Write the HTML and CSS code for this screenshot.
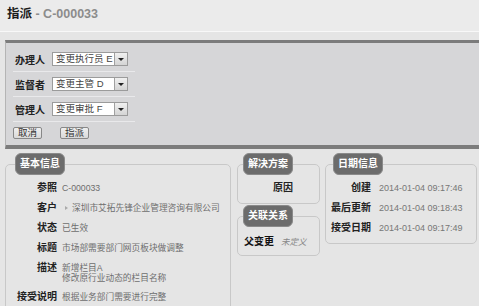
FILE: index.html
```html
<!DOCTYPE html>
<html lang="zh">
<head>
    <meta charset="UTF-8">
    <meta name="viewport" content="width=device-width, initial-scale=1.0">
    <title>指派 - C-000033</title>
    <link rel="stylesheet" href="styles.css">
</head>
<body>
    <!-- Title -->
    <div class="title-bar">
        <h1>指派 <span class="ref">- C-000033</span></h1>
    </div>

    <!-- Assign form -->
    <div class="assign-panel">
        <div class="form-row">
            <label>办理人</label>
            <div class="select"><span class="text">变更执行员 E</span><span class="drop"></span></div>
        </div>
        <div class="form-row">
            <label>监督者</label>
            <div class="select"><span class="text">变更主管 D</span><span class="drop"></span></div>
        </div>
        <div class="form-row">
            <label>管理人</label>
            <div class="select"><span class="text">变更审批 F</span><span class="drop"></span></div>
        </div>
        <div class="actions">
            <button>取消</button>
            <button>指派</button>
        </div>
    </div>

    <!-- Details -->
    <div class="details">
        <fieldset class="box box-main">
            <legend>基本信息</legend>
            <dl class="props">
                <dt>参照</dt><dd>C-000033</dd>
                <dt>客户</dt><dd><span class="caret"></span>深圳市艾拓先锋企业管理咨询有限公司</dd>
                <dt>状态</dt><dd>已生效</dd>
                <dt>标题</dt><dd>市场部需要部门网页板块做调整</dd>
                <dt>描述</dt><dd>新增栏目A<br>修改原行业动态的栏目名称</dd>
                <dt>接受说明</dt><dd>根据业务部门需要进行完整</dd>
            </dl>
        </fieldset>

        <div class="col-mid">
            <fieldset class="box box-solution">
                <legend>解决方案</legend>
                <dl class="props props-solution">
                    <dt>原因</dt><dd></dd>
                </dl>
            </fieldset>
            <fieldset class="box box-relation">
                <legend>关联关系</legend>
                <div class="relation">
                    <span class="rel-label">父变更</span>
                    <span class="rel-value">未定义</span>
                </div>
            </fieldset>
        </div>

        <fieldset class="box box-dates">
            <legend>日期信息</legend>
            <dl class="props props-dates">
                <dt>创建</dt><dd>2014-01-04 09:17:46</dd>
                <dt>最后更新</dt><dd>2014-01-04 09:18:43</dd>
                <dt>接受日期</dt><dd>2014-01-04 09:17:49</dd>
            </dl>
        </fieldset>
    </div>
</body>
</html>
```

FILE: styles.css
```css
/* Reset */
* {
    margin: 0;
    padding: 0;
    box-sizing: border-box;
}

body {
    width: 479px;
    height: 306px;
    overflow: hidden;
    background-color: #e5e5e5;
    font-family: "Liberation Sans", "Noto Sans CJK SC", sans-serif;
    color: #333;
}

/* Title bar */
.title-bar {
    height: 32px;
    padding-left: 7px;
    background-color: #ebebeb;
    border-bottom: 1px solid #f8f8f8;
}

.title-bar h1 {
    font-size: 12.5px;
    line-height: 28px;
    font-weight: bold;
    color: #1b1b1b;
}

.title-bar .ref {
    color: #8c8c8c;
}

/* Assign panel */
.assign-panel {
    margin: 8px 0 0 5px;
    padding: 4px 0 6px 7px;
    background-color: #d6d6d8;
    border-top: 3px solid #7c7c7c;
    border-bottom: 4px solid #7c7c7c;
    border-left: 1px solid #b4b4b4;
}

.form-row {
    display: flex;
    align-items: center;
    width: 122px;
    height: 25px;
    padding-left: 2px;
    border-bottom: 1px solid #e9e9eb;
}

.form-row label {
    width: 37px;
    font-size: 10px;
    font-weight: bold;
    color: #222;
}

.select {
    display: flex;
    width: 76px;
    height: 14px;
    background-color: #fff;
    border: 1px solid #9b9b9b;
    font-size: 9.5px;
    line-height: 12px;
    color: #444;
}

.select .text {
    flex: 1;
    padding-left: 3px;
    white-space: nowrap;
    overflow: hidden;
}

.select .drop {
    display: flex;
    align-items: center;
    justify-content: center;
    width: 13px;
    height: 12px;
    background: linear-gradient(#f0f0f0, #d4d4d4);
    border-left: 1px solid #a0a0a0;
}

.select .drop::after {
    content: "";
    border-left: 3px solid transparent;
    border-right: 3px solid transparent;
    border-top: 3px solid #222;
}

.actions {
    display: flex;
    gap: 18px;
    margin-top: 5px;
}

.actions button {
    height: 12px;
    padding: 0 4px;
    font-family: inherit;
    font-size: 9.5px;
    line-height: 10px;
    color: #333;
    background: linear-gradient(#efefef, #d9d9d9);
    border: 1px solid #888;
    border-radius: 2px;
}

/* Details */
.details {
    display: flex;
    align-items: flex-start;
    margin: 4px 0 0 5px;
}

.box {
    min-width: 0;
    border: 1px solid #c8c8c8;
    border-radius: 5px;
}

.box legend {
    padding: 0 4px;
    font-size: 10px;
    font-weight: bold;
    line-height: 22px;
    color: #fff;
    background-color: #6c6c6c;
    border: 1px solid #8a8a8a;
    border-radius: 6px;
    line-height: 20px;
}

.box-main {
    width: 226px;
}

.box-main legend {
    margin-left: 9px;
}

.props {
    display: grid;
    grid-template-columns: 45px auto;
    column-gap: 5px;
    row-gap: 8px;
    padding: 7px 0 10px 6px;
}

.props dt {
    font-size: 10px;
    font-weight: bold;
    line-height: 12px;
    text-align: right;
    white-space: nowrap;
    color: #222;
}

.props dd {
    padding-top: 1px;
    font-size: 8.7px;
    line-height: 10px;
    white-space: nowrap;
    color: #6e6e6e;
}

.caret {
    display: inline-block;
    margin: 0 4px 0 3px;
    vertical-align: 1px;
    border-left: 3px solid #aaa;
    border-top: 2.5px solid transparent;
    border-bottom: 2.5px solid transparent;
}

/* Middle column */
.col-mid {
    display: flex;
    flex-direction: column;
    gap: 1px;
    width: 83px;
    margin-left: 6px;
}

.box-solution legend,
.box-relation legend {
    margin-left: 5px;
}

.props-solution {
    grid-template-columns: 55px auto;
    padding: 7px 0 9px 0;
}

.relation {
    display: flex;
    align-items: center;
    gap: 7px;
    padding: 9px 0 7px 6px;
    line-height: 12px;
}

.rel-label {
    font-size: 10px;
    font-weight: bold;
    color: #111;
}

.rel-value {
    font-size: 8.5px;
    font-style: italic;
    color: #888;
}

/* Dates */
.box-dates {
    width: 152px;
    margin-left: 5px;
}

.box-dates legend {
    margin-left: 7px;
}

.props-dates {
    column-gap: 8px;
    padding: 7px 0 9px 0;
}

.props-dates dd {
    font-size: 9px;
    color: #777;
}
```
